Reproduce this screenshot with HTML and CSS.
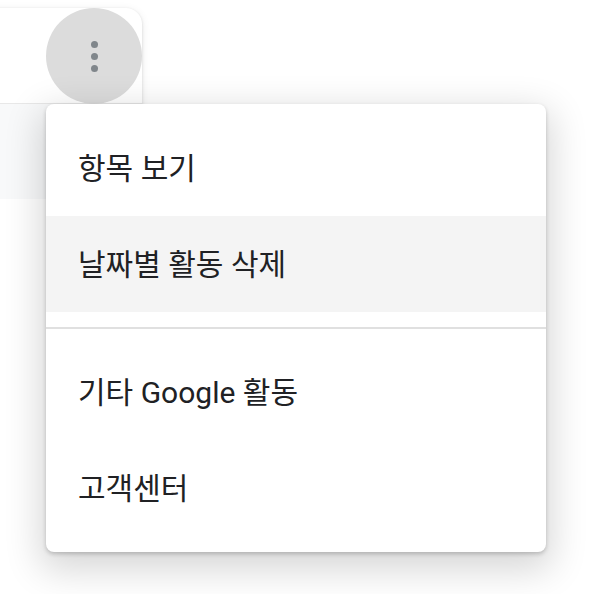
FILE: index.html
```html
<!DOCTYPE html>
<html lang="ko">
<head>
    <meta charset="UTF-8">
    <meta name="viewport" content="width=device-width, initial-scale=1.0">
    <title>내 활동</title>
    <link rel="stylesheet" href="styles.css">
</head>
<body>
    <div class="card">
        <div class="card-header">
            <button class="more-btn" aria-label="더보기">
                <span class="dot"></span>
                <span class="dot"></span>
                <span class="dot"></span>
            </button>
        </div>
        <div class="card-body"></div>
    </div>

    <div class="menu">
        <div class="menu-item">항목 보기</div>
        <div class="menu-item active">날짜별 활동 삭제</div>
        <div class="divider"></div>
        <div class="menu-item">기타 Google 활동</div>
        <div class="menu-item">고객센터</div>
    </div>
</body>
</html>
```

FILE: styles.css
```css
body {
    margin: 0;
    padding-top: 8px;
    background-color: white;
    font-family: Roboto, "Noto Sans CJK KR", sans-serif;
    color: #202124;
    overflow: hidden;
}
.card {
    width: 162px;
    margin-left: -20px;
    border-radius: 0 16px 0 0;
    background-color: white;
    box-shadow: 0 1px 3px rgba(0, 0, 0, 0.14), 0 2px 10px rgba(0, 0, 0, 0.08);
    overflow: hidden;
}
.card-header {
    height: 95px;
    display: flex;
    justify-content: flex-end;
}
.more-btn {
    width: 96px;
    height: 96px;
    border: none;
    border-radius: 50%;
    background-color: #dcdcdc;
    padding: 0;
    display: flex;
    flex-direction: column;
    align-items: center;
    justify-content: center;
    gap: 5px;
    cursor: pointer;
}
.dot {
    width: 7px;
    height: 7px;
    border-radius: 50%;
    background-color: #80868b;
}
.card-body {
    height: 95px;
    background-color: #f8f9fa;
    border-top: 1px solid #e8e8e8;
}
.menu {
    position: absolute;
    left: 46px;
    top: 104px;
    width: 500px;
    padding: 16px 0;
    background-color: white;
    border-radius: 8px;
    box-shadow: 0 2px 4px rgba(0, 0, 0, 0.2), 0 12px 36px 6px rgba(0, 0, 0, 0.16);
}
.menu-item {
    height: 96px;
    box-sizing: border-box;
    display: flex;
    align-items: center;
    padding: 0 0 4px 32px;
    font-size: 30px;
}
.menu-item.active {
    background-color: #f4f4f4;
}
.divider {
    height: 2px;
    margin: 15px 0 15px;
    background-color: #e0e0e0;
}
```
